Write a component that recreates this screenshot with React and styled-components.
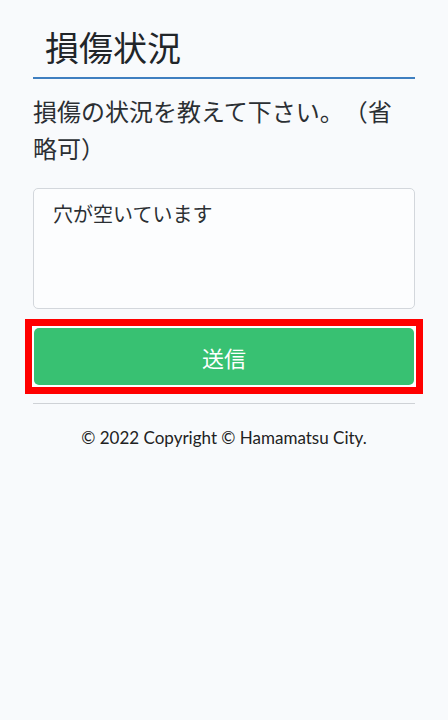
import React from 'react'
import styled, { createGlobalStyle } from 'styled-components'

const GlobalStyle = createGlobalStyle`
  html, body {
    margin: 0;
    background: #f8fafc;
  }
  body {
    font-family: "Noto Sans CJK JP", "Noto Sans", sans-serif;
    color: #212529;
    text-spacing-trim: space-all;
  }
`

const Page = styled.main`
  min-height: 720px;
  padding: 26px 33px 0;
  box-sizing: border-box;
`

const Title = styled.h2`
  margin: 0;
  padding: 0 0 10px 12px;
  font-size: 34px;
  font-weight: 400;
  line-height: 41px;
  border-bottom: 2px solid #3f7fc0;
`

const Form = styled.form`
  display: flex;
  flex-direction: column;
`

const Label = styled.label`
  margin-top: 13px;
  font-size: 24px;
  line-height: 37px;
  color: #2b2f33;
`

const TextArea = styled.textarea`
  margin-top: 22px;
  height: 121px;
  box-sizing: border-box;
  padding: 10px 19px;
  font-family: inherit;
  font-size: 20px;
  line-height: 30px;
  color: #2b2f33;
  background: #fcfdfe;
  border: 1px solid #d3d7dc;
  border-radius: 5px;
  resize: none;
  outline: none;
`

// red marker drawn round the submit button
const Highlight = styled.div`
  margin: 10px -8px 0;
  padding: 2px;
  border: 7px solid #ff0000;
  background: #fff;
  display: flex;
`

const SubmitButton = styled.button`
  flex: 1;
  height: 57px;
  background: #38c172;
  color: #fff;
  font-family: inherit;
  font-size: 22px;
  border: 0;
  border-radius: 5px;
  cursor: pointer;
`

const Divider = styled.hr`
  margin: 9px 0 0;
  border: 0;
  border-top: 1px solid #cfd2d6;
`

const Footer = styled.footer`
  margin-top: 21px;
  text-align: center;
  font-family: "Lato", "Noto Sans", sans-serif;
  font-size: 17px;
  line-height: 26px;
  color: #222;
`

export default function App() {
  const [text, setText] = React.useState('穴が空いています')

  return (
    <>
      <GlobalStyle />
      <Page>
        <Title>損傷状況</Title>
        <Form onSubmit={(e) => e.preventDefault()}>
          <Label htmlFor="damage">損傷の状況を教えて下さい。（省略可）</Label>
          <TextArea id="damage" value={text} onChange={(e) => setText(e.target.value)} />
          <Highlight>
            <SubmitButton type="submit">送信</SubmitButton>
          </Highlight>
        </Form>
        <Divider />
        <Footer>© 2022 Copyright © Hamamatsu City.</Footer>
      </Page>
    </>
  )
}
